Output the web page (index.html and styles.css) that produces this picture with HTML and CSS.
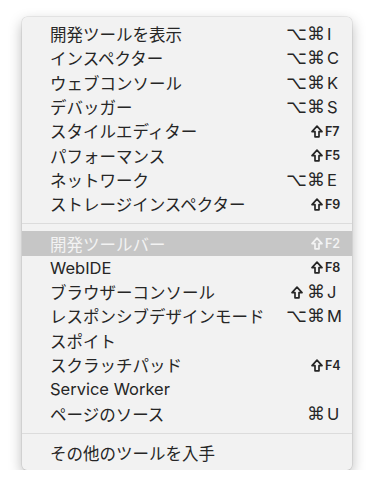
FILE: index.html
```html
<!DOCTYPE html>
<html>
<head>
    <link rel="stylesheet" href="styles.css">
</head>
<body>
    <div class="menu">
        <div class="item"><span class="label">開発ツールを表示</span><span class="keys"><span class="mod">⌥⌘</span><span class="key">I</span></span></div>
        <div class="item"><span class="label">インスペクター</span><span class="keys"><span class="mod">⌥⌘</span><span class="key">C</span></span></div>
        <div class="item"><span class="label">ウェブコンソール</span><span class="keys"><span class="mod">⌥⌘</span><span class="key">K</span></span></div>
        <div class="item"><span class="label">デバッガー</span><span class="keys"><span class="mod">⌥⌘</span><span class="key">S</span></span></div>
        <div class="item"><span class="label">スタイルエディター</span><span class="keys"><svg class="shift" viewBox="0 0 12 13"><path d="M6 1.2 L11 6.6 H8 V11.8 H4 V6.6 H1 Z"/></svg><span class="key fkey">F7</span></span></div>
        <div class="item"><span class="label">パフォーマンス</span><span class="keys"><svg class="shift" viewBox="0 0 12 13"><path d="M6 1.2 L11 6.6 H8 V11.8 H4 V6.6 H1 Z"/></svg><span class="key fkey">F5</span></span></div>
        <div class="item"><span class="label">ネットワーク</span><span class="keys"><span class="mod">⌥⌘</span><span class="key">E</span></span></div>
        <div class="item"><span class="label">ストレージインスペクター</span><span class="keys"><svg class="shift" viewBox="0 0 12 13"><path d="M6 1.2 L11 6.6 H8 V11.8 H4 V6.6 H1 Z"/></svg><span class="key fkey">F9</span></span></div>
        <div class="separator"></div>
        <div class="item selected"><span class="label">開発ツールバー</span><span class="keys"><svg class="shift" viewBox="0 0 12 13"><path d="M6 1.2 L11 6.6 H8 V11.8 H4 V6.6 H1 Z"/></svg><span class="key fkey">F2</span></span></div>
        <div class="item"><span class="label">WebIDE</span><span class="keys"><svg class="shift" viewBox="0 0 12 13"><path d="M6 1.2 L11 6.6 H8 V11.8 H4 V6.6 H1 Z"/></svg><span class="key fkey">F8</span></span></div>
        <div class="item"><span class="label">ブラウザーコンソール</span><span class="keys"><svg class="shift wide" viewBox="0 0 12 13"><path d="M6 1.2 L11 6.6 H8 V11.8 H4 V6.6 H1 Z"/></svg><span class="mod">⌘</span><span class="key">J</span></span></div>
        <div class="item"><span class="label">レスポンシブデザインモード</span><span class="keys"><span class="mod">⌥⌘</span><span class="key">M</span></span></div>
        <div class="item"><span class="label">スポイト</span></div>
        <div class="item"><span class="label">スクラッチパッド</span><span class="keys"><svg class="shift" viewBox="0 0 12 13"><path d="M6 1.2 L11 6.6 H8 V11.8 H4 V6.6 H1 Z"/></svg><span class="key fkey">F4</span></span></div>
        <div class="item"><span class="label">Service Worker</span></div>
        <div class="item"><span class="label">ページのソース</span><span class="keys"><span class="mod">⌘</span><span class="key">U</span></span></div>
        <div class="separator"></div>
        <div class="item"><span class="label">その他のツールを入手</span></div>
    </div>
</body>
</html>
```

FILE: styles.css
```css
body {
    margin: 0;
    background: #ffffff;
    font-family: Inter, "Noto Sans CJK JP", sans-serif;
}
.menu {
    width: 330px;
    margin: 17px 0 0 22px;
    padding: 5px 0 5px 0;
    background: #f2f2f2;
    border-radius: 5px;
    box-shadow: 0 5px 14px rgba(0, 0, 0, 0.28), 0 0 0 0.5px rgba(0, 0, 0, 0.12);
}
.item {
    display: flex;
    align-items: center;
    height: 24.3px;
    padding: 0 9px 0 28px;
    font-size: 16.5px;
    color: #262626;
}
.item .label {
    flex: 1;
    white-space: nowrap;
}
.item.selected {
    background: #c6c6c6;
    color: #f3f3f3;
}
.keys {
    display: flex;
    align-items: center;
}
.mod {
    font-family: "DejaVu Sans", sans-serif;
    font-size: 18px;
    line-height: 1;
    text-align: right;
}
.shift {
    width: 12px;
    height: 13px;
    fill: none;
    stroke: currentColor;
    stroke-width: 1.7;
    stroke-linejoin: round;
}
.shift.wide {
    margin-right: 4px;
}
.key {
    width: 16px;
    padding-left: 2px;
    font-size: 16.5px;
}
.key.fkey {
    width: 18px;
    padding-left: 2px;
    font-size: 12.5px;
    font-weight: 600;
}
.separator {
    height: 15px;
    display: flex;
    align-items: center;
}
.separator::after {
    content: "";
    flex: 1;
    height: 1px;
    background: #dcdcdc;
}
```
